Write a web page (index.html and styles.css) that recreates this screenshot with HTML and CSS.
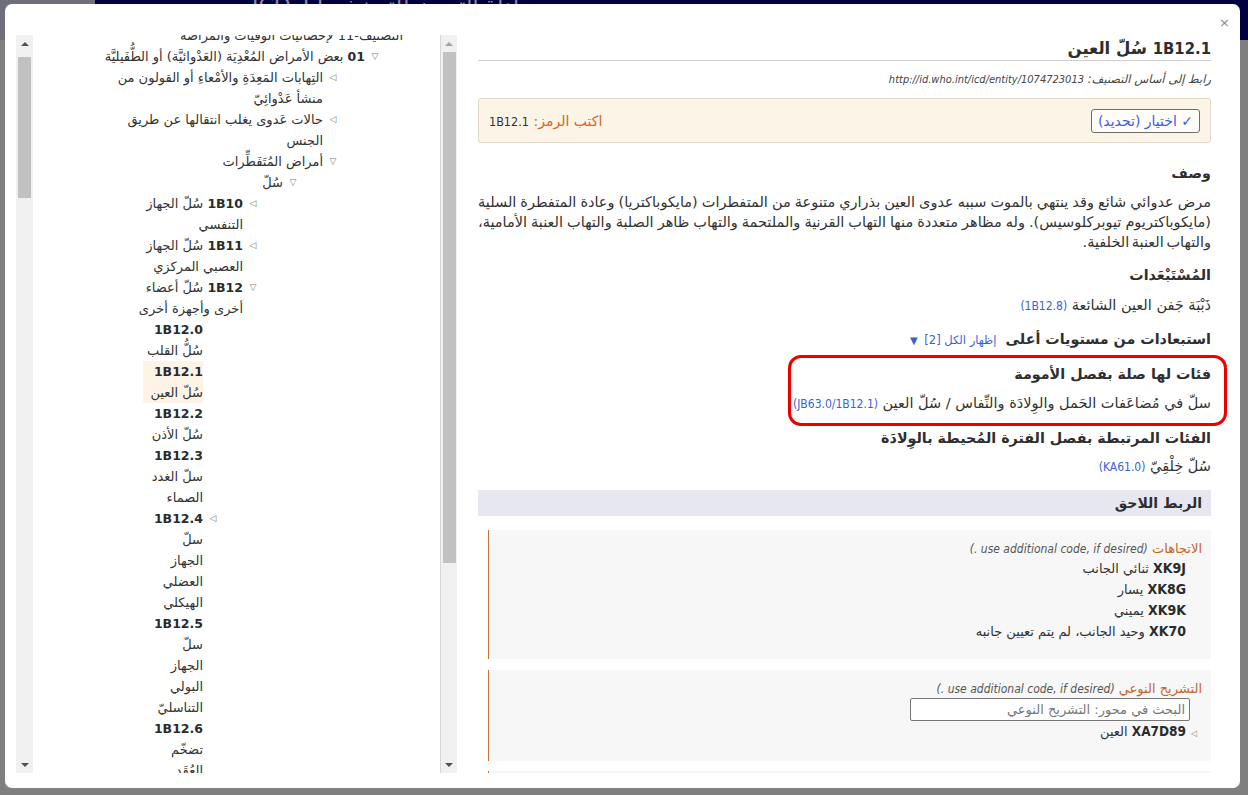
FILE: index.html
```html
<!DOCTYPE html>
<html lang="ar">
<head>
<meta charset="utf-8">
<title>1B12.1 سُلّ العين</title>
<link rel="stylesheet" href="styles.css">
</head>
<body>
<div class="page">
  <div class="backdrop-top">
    <div class="side-gap"></div>
    <div class="site-bar"><span class="site-title">أداة الترميز للتصنيف ICD-11</span></div>
  </div>

  <div class="modal" role="dialog">
    <button class="close" type="button">×</button>
    <div class="modal-body">
      <aside class="tree-pane">
        <div class="sb sb-left">
          <span class="sb-btn up dark"></span>
          <span class="sb-thumb thumb-left"></span>
          <span class="sb-fill"></span>
          <span class="sb-btn down"></span>
        </div>
        <div class="tree-view">
          <div class="tree">
            <div class="node l0"><span class="tg"></span><span class="lbl">التصنيف-11 لإحصائيات الوفيات والمراضة</span></div>
            <div class="node l1"><span class="tg">▽</span><span class="lbl"><b class="code">01</b> بعض الأمراض المُعْدِيَة (العَدْوائيَّة) أو الطُّفَيليَّة</span></div>
            <div class="node l2"><span class="tg">◁</span><span class="lbl">التِهابات المَعِدَةِ والأمْعاءِ أو القولون من<br>منشأ عَدْوائِيّ</span></div>
            <div class="node l2"><span class="tg">◁</span><span class="lbl">حالات عَدوى يغلب انتقالها عن طريق<br>الجنس</span></div>
            <div class="node l2"><span class="tg">▽</span><span class="lbl">أمراض المُتَفَطِّرات</span></div>
            <div class="node l3"><span class="tg">▽</span><span class="lbl">سُلّ</span></div>
            <div class="node l4"><span class="tg">◁</span><span class="lbl"><b class="code">1B10</b> سُلّ الجهاز<br>التنفسي</span></div>
            <div class="node l4"><span class="tg">◁</span><span class="lbl"><b class="code">1B11</b> سُلّ الجهاز<br>العصبي المركزي</span></div>
            <div class="node l4"><span class="tg">▽</span><span class="lbl"><b class="code">1B12</b> سُلّ أعضاء<br>أخرى وأجهزة أخرى</span></div>
            <div class="node l5"><span class="tg"></span><span class="lbl"><b class="code">1B12.0</b><br>سُلُّ القلب</span></div>
            <div class="node l5 current"><span class="tg"></span><span class="lbl"><b class="code">1B12.1</b><br>سُلّ العين</span></div>
            <div class="node l5"><span class="tg"></span><span class="lbl"><b class="code">1B12.2</b><br>سُلّ الأذن</span></div>
            <div class="node l5"><span class="tg"></span><span class="lbl"><b class="code">1B12.3</b><br>سلّ الغدد<br>الصماء</span></div>
            <div class="node l5"><span class="tg">◁</span><span class="lbl"><b class="code">1B12.4</b><br>سلّ<br>الجهاز<br>العضلي<br>الهيكلي</span></div>
            <div class="node l5"><span class="tg"></span><span class="lbl"><b class="code">1B12.5</b><br>سلّ<br>الجهاز<br>البولي<br>التناسليّ</span></div>
            <div class="node l5"><span class="tg"></span><span class="lbl"><b class="code">1B12.6</b><br>تضخّم<br>العُقَد<br>اللمفية</span></div>
          </div>
        </div>
        <div class="sb sb-right">
          <span class="sb-btn up"></span>
          <span class="sb-thumb thumb-right"></span>
          <span class="sb-fill"></span>
          <span class="sb-btn down"></span>
        </div>
      </aside>

      <main class="detail-pane">
        <h2 class="entity-title"><span class="title-code">1B12.1</span> سُلّ العين</h2>
        <p class="foundation">رابط إلى أساس التصنيف: <span class="uri">http://id.who.int/icd/entity/1074723013</span></p>

        <div class="code-box">
          <button class="select-btn" type="button">✓ اختيار (تحديد)</button>
          <span class="code-line"><span class="code-label">اكتب الرمز:</span> <span class="code-value">1B12.1</span></span>
        </div>

        <h3 class="sec-title first">وصف</h3>
        <p class="desc">مرض عدوائي شائع وقد ينتهي بالموت سببه عدوى العين بذراري متنوعة من المتفطرات (مايكوباكتريا) وعادة المتفطرة السلية (مايكوباكتريوم تيوبركلوسيس). وله مظاهر متعددة منها التهاب القرنية والملتحمة والتهاب ظاهر الصلبة والتهاب العنبة الأمامية، والتهاب العنبة الخلفية.</p>

        <h3 class="sec-title">المُسْتَبْعَدات</h3>
        <p class="ref-line">ذَبْبَة جَفن العين الشائعة <a class="ref">(1B12.8)</a></p>

        <h3 class="sec-title inline-head">استبعادات من مستويات أعلى <a class="show-all">إظهار الكل [2] <span class="caret">▼</span></a></h3>

        <div class="marked">
          <h3 class="sec-title">فئات لها صلة بفصل الأمومة</h3>
          <p class="ref-line">سلّ في مُضاعَفات الحَمل والوِلادَة والنِّفاس / سُلّ العين <a class="ref">(JB63.0/1B12.1)</a></p>
          <span class="marker"></span>
        </div>

        <h3 class="sec-title perinatal">الفئات المرتبطة بفصل الفترة المُحيطة بالوِلادَة</h3>
        <p class="ref-line">سُلّ خِلْقِيّ <a class="ref">(KA61.0)</a></p>

        <div class="band">الربط اللاحق</div>

        <div class="axis">
          <div class="axis-head"><span class="axis-name">الاتجاهات</span> <span class="axis-note">(use additional code, if desired .)</span></div>
          <ul class="axis-list">
            <li><b>XK9J</b> ثنائي الجانب</li>
            <li><b>XK8G</b> يسار</li>
            <li><b>XK9K</b> يميني</li>
            <li><b>XK70</b> وحيد الجانب، لم يتم تعيين جانبه</li>
          </ul>
        </div>

        <div class="axis second">
          <div class="axis-head"><span class="axis-name">التشريح النوعي</span> <span class="axis-note">(use additional code, if desired .)</span></div>
          <input class="axis-search" type="text" placeholder="البحث في محور: التشريح النوعي">
          <ul class="axis-list tight">
            <li><span class="tg-s">◁</span><b>XA7D89</b> العين</li>
          </ul>
        </div>

        <div class="axis third"></div>
      </main>
    </div>
  </div>
</div>
</body>
</html>
```

FILE: styles.css
```css
* { box-sizing: border-box; }

html, body {
  margin: 0;
  padding: 0;
}

body {
  background: #7f7f7f;
  font-family: "DejaVu Sans", sans-serif;
  color: #333;
  overflow: hidden;
}

.page {
  position: relative;
  width: 1248px;
  height: 795px;
  overflow: hidden;
}

/* page behind the dialog (dimmed) */
.backdrop-top {
  display: flex;
  height: 40px;
}

.side-gap {
  width: 95px;
  background: #6f6f7b;
}

.site-bar {
  flex: 1;
  background: #01013f;
  padding-left: 157px;
  color: #8a8aa8;
  font-size: 22px;
  line-height: 12px;
  white-space: nowrap;
  overflow: hidden;
}

.site-title {
  display: inline-block;
  direction: rtl;
  margin-top: -6px;
}

/* dialog */
.modal {
  position: absolute;
  left: 5px;
  top: 4px;
  width: 1235px;
  height: 784px;
  background: #fff;
  border-radius: 7px;
  padding: 31px 10px 15px 11px;
}

.close {
  position: absolute;
  right: 10px;
  top: 11px;
  border: 0;
  background: none;
  padding: 0;
  font-family: "DejaVu Sans", sans-serif;
  font-size: 13px;
  color: #8a8a8a;
  cursor: pointer;
}

.modal-body {
  display: flex;
  gap: 21px;
  height: 738px;
}

/* tree */
.tree-pane {
  width: 441px;
  flex: none;
  display: flex;
  height: 100%;
}

.sb {
  width: 17px;
  flex: none;
  background: #f0f0f0;
  display: flex;
  flex-direction: column;
  align-items: center;
}

.sb-right {
  border-left: 1px solid #d6d6d6;
}

.sb-btn {
  height: 17px;
  width: 100%;
  flex: none;
  display: flex;
  align-items: center;
  justify-content: center;
}

.sb-btn::before {
  content: "";
  width: 0;
  height: 0;
  border-left: 4px solid transparent;
  border-right: 4px solid transparent;
}

.sb-btn.up::before { border-bottom: 4px solid #a3a3a3; }
.sb-btn.up.dark::before { border-bottom-color: #505050; }
.sb-btn.down::before { border-top: 4px solid #505050; }

.sb-thumb {
  width: 13px;
  flex: none;
  background: #c1c1c1;
}

.thumb-left {
  margin-top: 5px;
  height: 141px;
}

.thumb-right {
  height: 511px;
}

.sb-fill { flex: 1; }

.tree-view {
  flex: 1;
  overflow: hidden;
  background: #fff;
  direction: rtl;
}

.tree {
  margin-top: -10px;
  padding-right: 17px;
  font-size: 13px;
  line-height: 21px;
  color: #333;
}

.node {
  display: flex;
  align-items: flex-start;
  white-space: nowrap;
}

.tg {
  width: 20px;
  flex: none;
  text-align: center;
  font-size: 9px;
  color: #7c7c7c;
  line-height: 21px;
}

.lbl { display: block; }

.code {
  font-weight: bold;
  font-size: 12.5px;
  color: #2b2b2b;
}

.l1 { margin-right: 38px; }
.l2 { margin-right: 80px; }
.l3 { margin-right: 120px; }
.l4 { margin-right: 160px; }
.l5 { margin-right: 200px; }

.l5 .lbl { width: 60px; }

.current .lbl { background: #fdf3e6; }

/* details */
.detail-pane {
  flex: 1;
  min-width: 0;
  height: 100%;
  overflow: hidden;
  direction: rtl;
  text-align: right;
  padding-right: 19px;
  font-family: "DejaVu Sans", sans-serif;
  font-size: 14.5px;
  color: #333;
}

/* latin runs use the condensed face */
.title-code,
.uri,
.code-value,
.ref,
.axis-note,
.axis-list b {
  font-family: "DejaVu Sans Condensed", "DejaVu Sans", sans-serif;
  font-stretch: condensed;
}

.entity-title {
  margin: 0;
  padding-top: 2px;
  font-size: 16.5px;
  line-height: 23px;
  font-weight: bold;
  border-bottom: 1px solid #cfcfcf;
  color: #2e2e2e;
}

.title-code { font-size: 16.5px; }

.foundation {
  margin: 10px 0 0;
  font-size: 11.5px;
  line-height: 16px;
  font-style: italic;
  color: #444;
}

.uri { font-size: 11px; }

.code-box {
  margin-top: 10px;
  height: 45px;
  display: flex;
  align-items: center;
  justify-content: space-between;
  padding: 0 10px;
  background: #fdf4e8;
  border: 1px solid #e2d9cd;
  border-radius: 3px;
}

.select-btn {
  height: 24px;
  padding: 0 6px;
  font-family: inherit;
  font-size: 14px;
  color: #3c5fd3;
  background: #fffdfa;
  border: 1px solid #6d6d6d;
  border-radius: 3px;
}

.code-label { color: #d2691e; font-size: 14px; }
.code-value { color: #333; font-size: 12.5px; }

.sec-title {
  margin: 13px 0 0;
  font-size: 14.3px;
  line-height: 20px;
  font-weight: bold;
  color: #2e2e2e;
}

.sec-title.first { margin-top: 20px; }

.desc {
  margin: 9px 0 0;
  line-height: 20px;
  font-size: 14.5px;
  word-spacing: -2px;
  text-align: justify;
}

.ref-line {
  margin: 10px 0 0;
  line-height: 20px;
}

.ref {
  color: #3d5fd6;
  text-decoration: none;
  font-size: 12px;
}

.inline-head .show-all {
  margin-right: 4px;
  font-size: 11.5px;
  font-weight: normal;
  color: #3d5fd6;
}

.caret {
  font-size: 10px;
  margin-right: 3px;
}

.marked {
  position: relative;
  margin-top: 13px;
}

.marked .sec-title { margin-top: 0; }
.marked .ref-line { margin-top: 9px; }

.marker {
  position: absolute;
  top: -9px;
  bottom: -12px;
  right: -16px;
  width: 439px;
  border: 3px solid #ec0000;
  border-radius: 13px;
}

.sec-title.perinatal { margin-top: 14px; }
.perinatal + .ref-line { margin-top: 8px; }

.band {
  margin-top: 13px;
  height: 26px;
  line-height: 26px;
  padding-right: 9px;
  background: #e7e7f0;
  font-weight: bold;
  font-size: 14px;
  color: #2e2e2e;
}

.axis {
  margin: 14px 0 0 10px;
  background: #f7f7f7;
  border-left: 1px solid #c4733b;
  padding: 10px 9px 17px 10px;
}

.axis.second { margin-top: 11px; padding-bottom: 17px; }
.axis.third { margin-top: 10px; height: 30px; padding: 0; }

.axis-head {
  line-height: 18px;
  font-size: 13px;
}

.axis-name { color: #c8642a; }

.axis-note {
  font-style: italic;
  color: #555;
  font-size: 12px;
}

.axis-list {
  list-style: none;
  margin: 0;
  padding: 0 16px 0 0;
  line-height: 21px;
  font-size: 13px;
}

.axis-list b {
  font-weight: bold;
  font-size: 14px;
  color: #2b2b2b;
}

.axis-list.tight b { font-size: 13.5px; }

.axis-search {
  display: block;
  width: 280px;
  height: 23px;
  margin-right: 12px;
  padding: 0 4px;
  border: 1px solid #767676;
  border-radius: 2px;
  font-family: inherit;
  font-size: 13px;
  direction: rtl;
  background: #fff;
}

.axis-search::placeholder { color: #777; }

.axis-list.tight { padding-right: 0; }

.tg-s {
  display: inline-block;
  width: 16px;
  font-size: 8px;
  color: #8c8c8c;
  text-align: center;
}
```
